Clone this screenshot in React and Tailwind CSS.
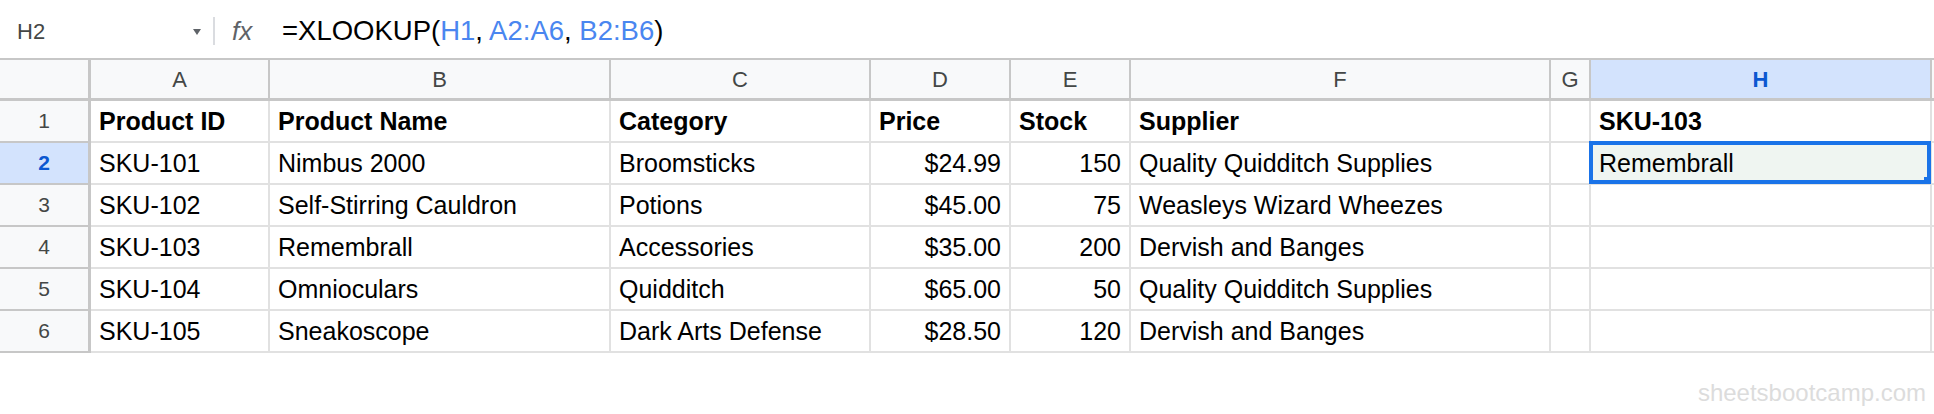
import React from 'react';

const columns = ['A', 'B', 'C', 'D', 'E', 'F', 'G', 'H'];

const rows = [
  ['Product ID', 'Product Name', 'Category', 'Price', 'Stock', 'Supplier', '', 'SKU-103'],
  ['SKU-101', 'Nimbus 2000', 'Broomsticks', '$24.99', '150', 'Quality Quidditch Supplies', '', 'Remembrall'],
  ['SKU-102', 'Self-Stirring Cauldron', 'Potions', '$45.00', '75', 'Weasleys Wizard Wheezes', '', ''],
  ['SKU-103', 'Remembrall', 'Accessories', '$35.00', '200', 'Dervish and Banges', '', ''],
  ['SKU-104', 'Omnioculars', 'Quidditch', '$65.00', '50', 'Quality Quidditch Supplies', '', ''],
  ['SKU-105', 'Sneakoscope', 'Dark Arts Defense', '$28.50', '120', 'Dervish and Banges', '', ''],
];

const gridCols = 'grid grid-cols-[91px_179px_341px_260px_140px_120px_420px_40px_341px_1fr]';

const Cell = ({ value, bold, right, selected }) => (
  <div
    className={`relative flex h-[42px] items-center border-r-2 border-b-2 border-[#e1e1e1] px-2 pt-[2px] text-[25px] text-black whitespace-nowrap ${
      right ? 'justify-end' : ''
    } ${bold ? 'font-bold' : ''} ${selected ? 'bg-[#eff5f1]' : 'bg-white'}`}
  >
    {value}
    {selected && (
      <div className="absolute -top-[2px] -left-[2px] -right-[1px] -bottom-[1px] border-[4px] border-[#1a73e8]">
        <div className="absolute -right-[4px] -bottom-[4px] h-[7px] w-[7px] bg-[#1a73e8]" />
      </div>
    )}
  </div>
);

export default function App() {
  return (
    <div className="w-[1934px] h-[414px] bg-white font-['Liberation_Sans',Arial,sans-serif] overflow-hidden">
      {/* Formula bar */}
      <div className="flex h-[58px] items-center pt-[4px]">
        <div className="w-[213px] flex items-center pl-[17px] pr-[12px] text-[22px] text-[#444746]">
          <span className="flex-1">H2</span>
          <svg width="8" height="6" viewBox="0 0 8 6" className="mt-[2px]">
            <path d="M0 0 L8 0 L4 6 Z" fill="#5f6368" />
          </svg>
        </div>
        <div className="h-[28px] w-[2px] bg-[#dadce0]" />
        <div className="ml-[17px] w-[50px] text-[26px] italic text-[#5f6368]">fx</div>
        <div className="text-[27.5px] text-black">
          =XLOOKUP(<span className="text-[#4a86f0]">H1</span>, <span className="text-[#4a86f0]">A2:A6</span>,{' '}
          <span className="text-[#4a86f0]">B2:B6</span>)
        </div>
      </div>

      {/* Column headers */}
      <div className={`${gridCols} h-[43px] border-t-2 border-b-[3px] border-[#c7c7c7] bg-[#f8f9fa]`}>
        <div className="border-r-[3px] border-[#c7c7c7]" />
        {columns.map((c) => (
          <div
            key={c}
            className={`flex items-center justify-center border-r-2 border-[#c7c7c7] text-[22px] ${
              c === 'H' ? 'bg-[#d3e3fd] font-bold text-[#0b57d0]' : 'text-[#444746]'
            }`}
          >
            {c}
          </div>
        ))}
        <div />
      </div>

      {/* Rows */}
      {rows.map((row, r) => (
        <div key={r} className={gridCols}>
          <div
            className={`flex h-[42px] items-center justify-center border-r-[3px] border-b-2 border-[#c7c7c7] text-[21px] ${
              r === 1 ? 'bg-[#d3e3fd] font-bold text-[#0b57d0]' : 'bg-[#f8f9fa] text-[#444746]'
            }`}
          >
            {r + 1}
          </div>
          {row.map((v, c) => (
            <Cell
              key={c}
              value={v}
              bold={r === 0}
              right={r > 0 && (c === 3 || c === 4)}
              selected={r === 1 && c === 7}
            />
          ))}
          <div className="h-[42px] border-b-2 border-[#e1e1e1]" />
        </div>
      ))}

      {/* Watermark */}
      <div className="flex justify-end pr-[8px] pt-[22px] text-[24px] text-[#dcdcdc]">sheetsbootcamp.com</div>
    </div>
  );
}
